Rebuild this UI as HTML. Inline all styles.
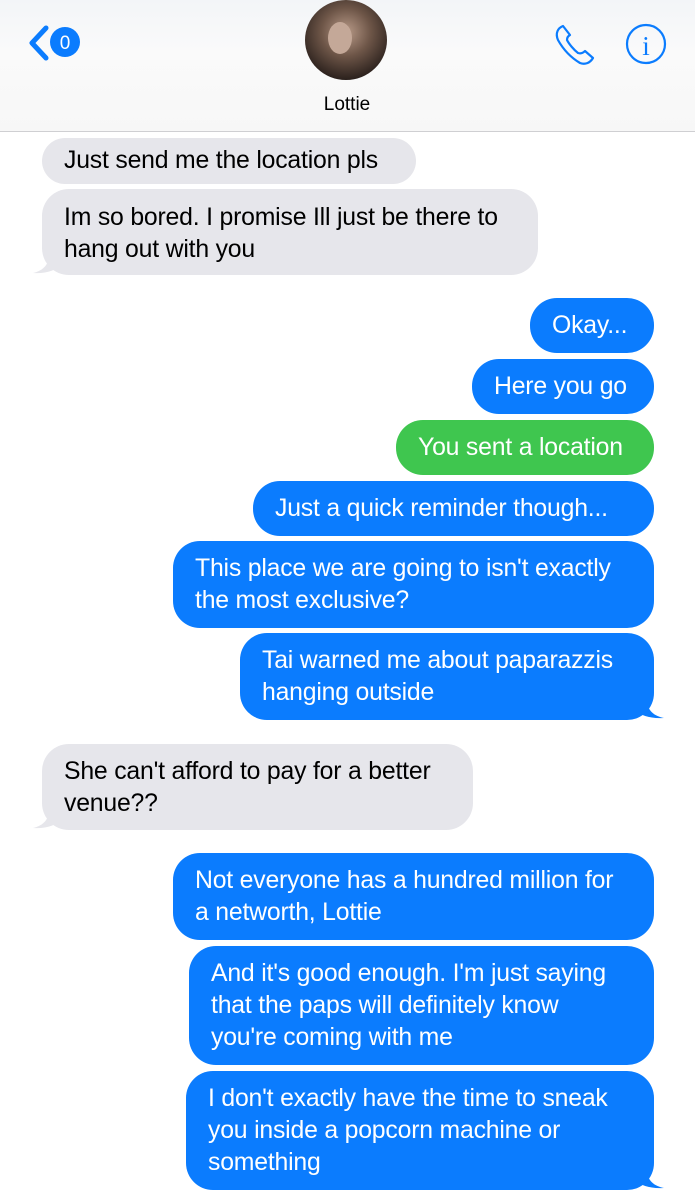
<!DOCTYPE html>
<html><head><style>
body{margin:0;width:695px;height:1200px;background:#fff;position:relative;overflow:hidden;font-family:"Liberation Sans",sans-serif;}
.b{position:absolute;border-radius:27px;font-size:24.8px;line-height:32px;padding:12px 22px 0 22px;box-sizing:border-box;letter-spacing:-0.2px;white-space:nowrap;}
.g{background:#e6e6eb;color:#000;}
.u{background:#0b7cfe;color:#fff;}
.gr{background:#3fc64f;color:#fff;}
.hdr{position:absolute;left:0;top:0;width:695px;height:131px;background:linear-gradient(#f3f5f8,#fafafa 40%,#f7f7f7);border-bottom:1.5px solid #cfcfd2;}
</style></head><body>
<div class="hdr"></div>
<svg style="position:absolute;left:0;top:0" width="695" height="135">
<path d="M46 28 L32 43 L46 58" fill="none" stroke="#0b7cfe" stroke-width="5" stroke-linecap="round" stroke-linejoin="round"/>
<circle cx="65" cy="42" r="15" fill="#0b7cfe"/>
<text x="65" y="49" fill="#fff" font-size="19" text-anchor="middle" font-family="Liberation Sans">0</text>
<defs><radialGradient id="av" cx="50%" cy="40%" r="60%"><stop offset="0" stop-color="#b89a88"/><stop offset="0.5" stop-color="#6e5648"/><stop offset="1" stop-color="#2a201c"/></radialGradient></defs>
<ellipse cx="346" cy="40" rx="41" ry="40" fill="url(#av)"/>
<ellipse cx="340" cy="38" rx="12" ry="16" fill="#c4a898"/>
<path d="M563 26 c-5 2 -8 7 -5 14 c5 9 12 17 22 23 c5 2 10 0 13 -5 l-8 -7 c-2 2 -4 3 -7 2 c-4 -3 -9 -9 -11 -13 c0 -2 1 -4 3 -5 z" fill="none" stroke="#0b7cfe" stroke-width="2.2" stroke-linejoin="round"/>
<circle cx="646" cy="44" r="19" fill="none" stroke="#0b7cfe" stroke-width="2.2"/>
<text x="646" y="55" fill="#0b7cfe" font-size="27" text-anchor="middle" font-family="Liberation Serif">i</text>
<text x="347" y="110" fill="#000" font-size="19" text-anchor="middle" font-family="Liberation Sans">Lottie</text>
</svg>
<svg style="position:absolute;left:0;top:0" width="695" height="1200">
<path d="M50 255 C48 266 42 271 33 273 C46 274 56 270 62 265 Z" fill="#e6e6eb"/>
<path d="M50 810 C48 821 42 826 33 828 C46 829 56 825 62 820 Z" fill="#e6e6eb"/>
<path d="M646 700 C648 711 654 716 664 718 C650 719 640 715 634 710 Z" fill="#0b7cfe"/>
<path d="M646 1170 C648 1181 654 1186 664 1188 C650 1189 640 1185 634 1180 Z" fill="#0b7cfe"/>
</svg>
<div class="b g" style="left:42px;top:138px;width:374px;height:46px;padding-top:7px">Just send me the location pls</div>
<div class="b g" style="left:42px;top:189px;width:496px;height:86px;padding-top:13px">Im so bored. I promise Ill just be there to<br>hang out with you</div>
<div class="b u" style="left:530px;top:298px;width:124px;height:55px">Okay...</div>
<div class="b u" style="left:472px;top:359px;width:182px;height:55px">Here you go</div>
<div class="b gr" style="left:396px;top:420px;width:258px;height:55px">You sent a location</div>
<div class="b u" style="left:253px;top:481px;width:401px;height:55px">Just a quick reminder though...</div>
<div class="b u" style="left:173px;top:541px;width:481px;height:87px">This place we are going to isn't exactly<br>the most exclusive?</div>
<div class="b u" style="left:240px;top:633px;width:414px;height:87px">Tai warned me about paparazzis<br>hanging outside</div>
<div class="b g" style="left:42px;top:744px;width:431px;height:86px">She can't afford to pay for a better<br>venue??</div>
<div class="b u" style="left:173px;top:853px;width:481px;height:87px">Not everyone has a hundred million for<br>a networth, Lottie</div>
<div class="b u" style="left:189px;top:946px;width:465px;height:119px">And it's good enough. I'm just saying<br>that the paps will definitely know<br>you're coming with me</div>
<div class="b u" style="left:186px;top:1071px;width:468px;height:119px">I don't exactly have the time to sneak<br>you inside a popcorn machine or<br>something</div>
</body></html>
